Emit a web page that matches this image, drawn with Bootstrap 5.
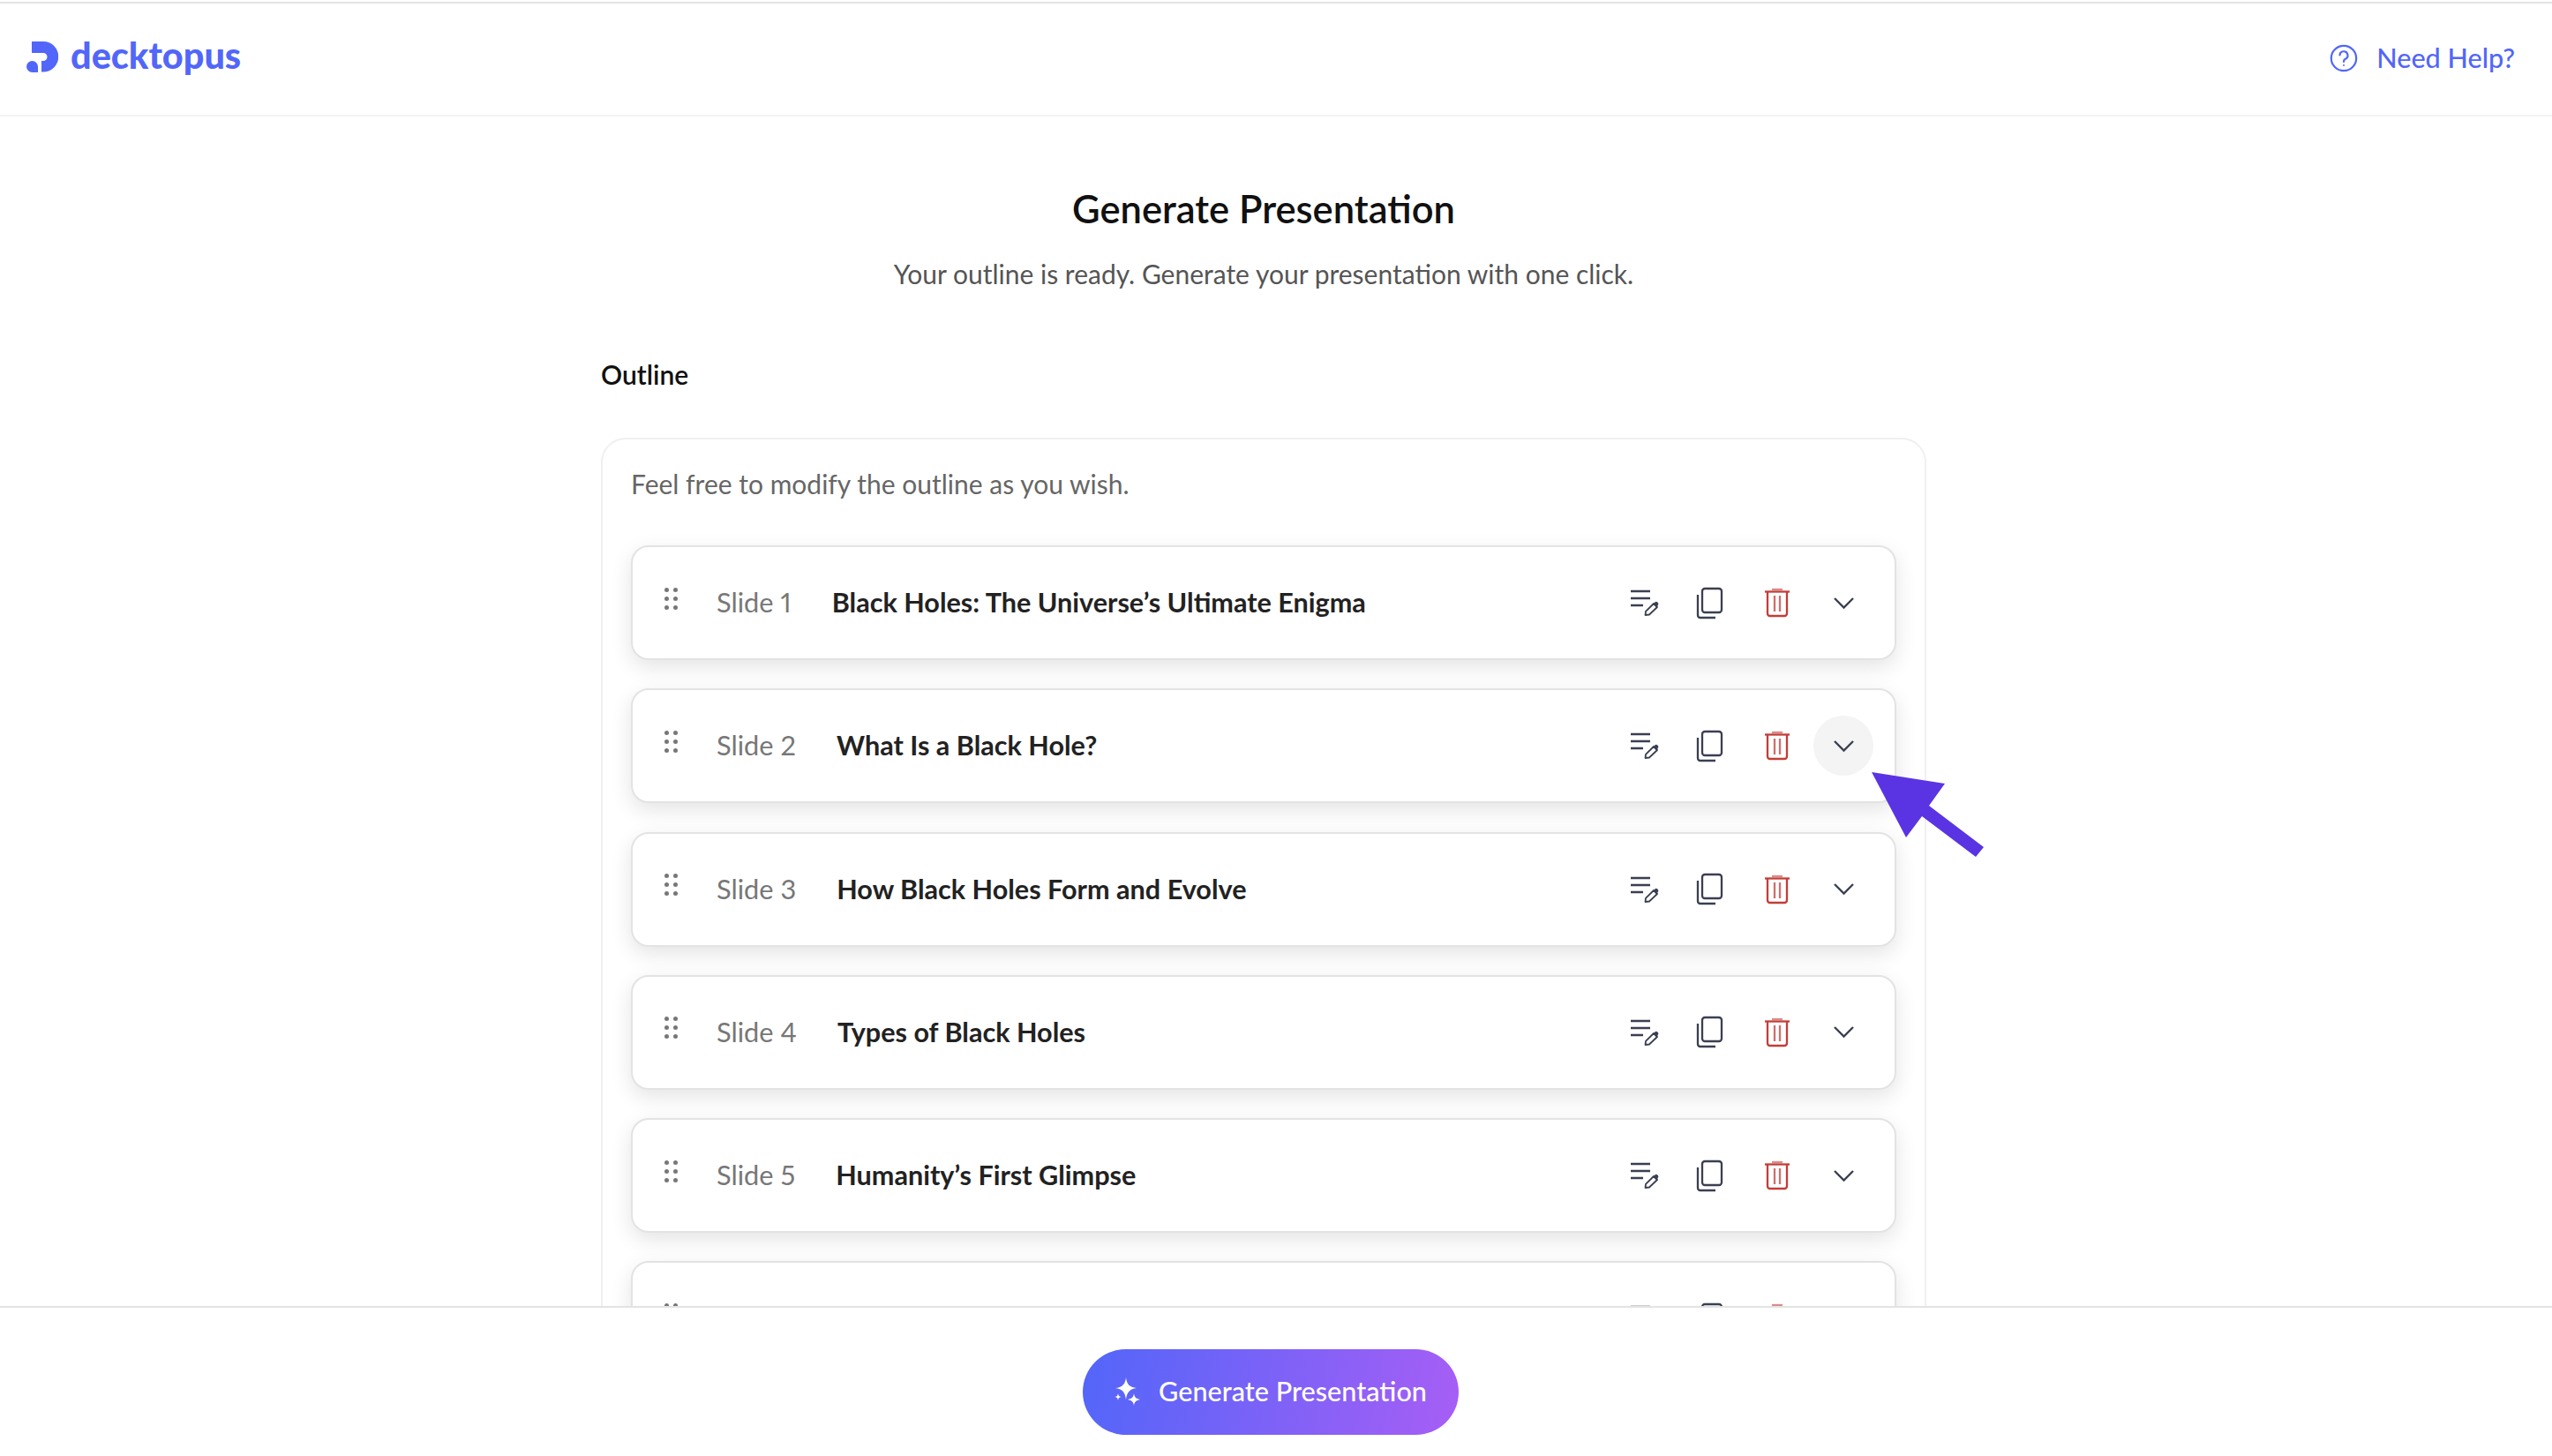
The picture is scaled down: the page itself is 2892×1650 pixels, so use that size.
<!DOCTYPE html>
<html lang="en">
<head>
    <meta charset="UTF-8">
    <meta name="viewport" content="width=device-width, initial-scale=1.0">
    <title>Generate Presentation</title>
    <link rel="stylesheet" href="https://cdn.jsdelivr.net/npm/bootstrap@5.3.0/dist/css/bootstrap.min.css">
    <style>
        html, body { height: 100%; }
        body { font-family: "Lato", "Liberation Sans", sans-serif; color: #111; background: #fff; overflow: hidden; padding-top: 2px; font-variant-numeric: proportional-nums; }
        .top-bar { height: 130px; border-top: 2px solid #e3e3e3; border-bottom: 2px solid #f3f3f3; padding: 0 42px 0 30px; flex: none; }
        .brand-name { font-size: 41.400px; font-weight: 900; color: #5266f9; margin-left: 14px; line-height: 1; margin-top: -8px; }
        .brand-logo { margin-top: -6px; }
        .help-link { font-size: 30.600px; font-weight: 500; color: #5266f9; gap: 21px; text-decoration: none; margin-top: -2px; }
        .page-body { min-height: 0; padding-right: 28px; }
        .content-col { width: 1502px; }
        .page-title { font-size: 43.500px; font-weight: 600; line-height: 50px; margin: 79px 0 0; text-align: center; }
        .page-sub { font-size: 30px; line-height: 40px; color: #555; margin: 29px 0 0; text-align: center; }
        .outline-label { font-size: 30px; font-weight: 600; line-height: 40px; margin: 74px 0 0; }
        .outline-box { margin-top: 52px; border: 2px solid #f0f0f0; border-radius: 28px; padding: 30px 32px 0; }
        .outline-hint { font-size: 30px; line-height: 40px; color: #666; margin: 0 0 50px; }
        .slide-row { height: 130px; margin-bottom: 32.300px; border: 2px solid #e3e3e3; border-radius: 20px; box-shadow: 0 8px 24px rgba(0, 0, 0, .11); padding: 0 24px 0 36px; background: #fff; }
        .drag-dots { display: grid; grid-template-columns: 5px 5px; gap: 5px; margin-top: -10px; width: 15px; }
        .drag-dots i { width: 5px; height: 5px; border-radius: 50%; background: #777; }
        .slide-num { font-size: 30.800px; color: #777; margin-left: 44px; margin-right: 46px; white-space: nowrap; }
        .slide-name { font-size: 30.600px; font-weight: 700; color: #222; }
        .row-btn { width: 68px; height: 68px; border-radius: 50%; flex: none; }
        .row-btn.is-hover { background: #f4f4f4; }
        .edit-btn svg { margin-left: 5px; }
        .trash-btn svg { margin-left: 2px; }
        .bottom-bar { height: 170px; border-top: 2px solid #e3e3e3; background: #fff; flex: none; padding: 22px 12px 0 0; position: relative; }
        .gen-btn { width: 426px; height: 97px; border: 0; border-radius: 49px; color: #fff; font-size: 30.600px; font-weight: 500; gap: 20px; background: linear-gradient(100deg, #5266f9 0%, #a75ef5 100%); }
        .pointer-arrow { left: 2121px; top: 875px; }
    </style>
</head>
<body class="d-flex flex-column position-relative">
    <!-- Header -->
    <header class="top-bar d-flex align-items-center justify-content-between">
        <div class="d-flex align-items-center">
            <svg class="brand-logo" width="36" height="35" viewBox="0 0 36 35" fill="#5266f9"><path d="M6 0H19A17.200 17.200 0 0 1 19 34.500H17V22H19A4.500 4.500 0 0 0 19 13H6Z"/><path d="M6.500 22A6.500 6.500 0 0 1 13 28.500V35H6.500A6.500 6.500 0 0 1 6.500 22Z"/></svg>
            <span class="brand-name">decktopus</span>
        </div>
        <a class="help-link d-flex align-items-center" href="#">
            <svg width="32" height="32" viewBox="0 0 32 32" fill="none" stroke="#5266f9" stroke-width="2.200"><circle cx="16" cy="16" r="14.200"/><path d="M11.500 12.500A4.500 4.500 0 1 1 17.500 17Q16 17.800 16 20" stroke-linecap="round"/><circle cx="16" cy="24" r="1" fill="#5266f9" stroke="none"/></svg>
            <span>Need Help?</span>
        </a>
    </header>

    <!-- Outline -->
    <main class="page-body flex-grow-1 overflow-hidden d-flex justify-content-center">
        <div class="content-col">
            <h1 class="page-title">Generate Presentation</h1>
            <p class="page-sub">Your outline is ready. Generate your presentation with one click.</p>
            <h2 class="outline-label">Outline</h2>
            <div class="outline-box">
                <p class="outline-hint">Feel free to modify the outline as you wish.</p>
                <div id="slideList"></div>
            </div>
        </div>
    </main>

    <!-- Footer -->
    <footer class="bottom-bar d-flex align-items-center justify-content-center">
        <button class="gen-btn d-flex align-items-center justify-content-center" type="button">
            <svg width="30" height="36" viewBox="0 0 30 36" fill="#fff"><path d="M13 2C14 10 17 13 25 14C17 15 14 19 13 27C12 19 9 15 1 14C9 13 12 10 13 2Z"/><path d="M22 20C22.600 24 24 26 29 27C24 28 22.600 30 22 34C21.400 30 20 28 15 27C20 26 21.400 24 22 20Z"/><path d="M4 20C4.300 22.500 5 23.500 7.500 24C5 24.500 4.300 25.500 4 28C3.700 25.500 3 24.500 .5 24C3 23.500 3.700 22.500 4 20Z"/></svg>
            <span>Generate Presentation</span>
        </button>
    </footer>

    <!-- Annotation arrow -->
    <svg class="pointer-arrow position-absolute" width="128" height="97" viewBox="0 0 128 97" fill="#5a34e2"><path d="M0 0L83 13L65 38L127 85L118 96L57 50L39 74Z"/></svg>

    <script src="https://cdn.jsdelivr.net/npm/bootstrap@5.3.0/dist/js/bootstrap.bundle.min.js"></script>
    <script>
        const slides = [
            "Black Holes: The Universe’s Ultimate Enigma",
            "What Is a Black Hole?",
            "How Black Holes Form and Evolve",
            "Types of Black Holes",
            "Humanity’s First Glimpse",
            ""
        ];

        const editIcon = `<svg width="32" height="30" viewBox="0 0 32 30" fill="none" stroke="#3a3f52" stroke-width="2.400"><path d="M0 2H22M0 10H22M0 18H14"/><path d="M16.500 29L17 24.800L26 16L30 20L21 28.500Z" stroke-width="1.800" stroke-linejoin="round"/><path d="M25.500 16.500L28 14Q29 13.400 30 14.300L31 15.300Q31.800 16.300 31 17.300L29.500 20.500Z" fill="#3a3f52" stroke="none"/></svg>`;
        const copyIcon = `<svg width="31" height="37" viewBox="0 0 31 37" fill="none" stroke="#3a3f52" stroke-width="2.300"><rect x="7" y="2" width="22" height="27" rx="3"/><path d="M2 9V32Q2 35 5 35H22"/></svg>`;
        const trashIcon = `<svg width="32" height="36" viewBox="0 0 32 36" fill="none" stroke="#c33d38" stroke-width="2.300"><path d="M10 3H22" stroke-opacity=".6"/><path d="M2 5.500H30"/><path d="M5 6V30Q5 33 8 33H24Q27 33 27 30V6"/><path d="M13 10V28M19 10V28" stroke-opacity=".75"/></svg>`;
        const chevronIcon = `<svg width="25" height="15" viewBox="0 0 25 15" fill="none" stroke="#3a3f52" stroke-width="2.400"><path d="M2 2L12.500 12.500L23 2"/></svg>`;

        function renderSlides() {
            let list = document.getElementById("slideList");
            slides.forEach((title, index) => {
                let hoverClass = index === 1 ? " is-hover" : "";
                // the sixth row is mostly under the footer, its texts don't show
                let label = title ? `Slide ${index + 1}` : "";
                list.innerHTML += `<div class="slide-row d-flex align-items-center">
                    <div class="drag-dots"><i></i><i></i><i></i><i></i><i></i><i></i></div>
                    <span class="slide-num">${label}</span>
                    <span class="slide-name flex-grow-1">${title}</span>
                    <div class="d-flex gap-2">
                        <span class="row-btn edit-btn d-flex align-items-center justify-content-center">${editIcon}</span>
                        <span class="row-btn d-flex align-items-center justify-content-center">${copyIcon}</span>
                        <span class="row-btn trash-btn d-flex align-items-center justify-content-center">${trashIcon}</span>
                        <span class="row-btn d-flex align-items-center justify-content-center${hoverClass}">${chevronIcon}</span>
                    </div>
                </div>`;
            });
        }

        document.addEventListener("DOMContentLoaded", renderSlides);
    </script>
</body>
</html>
